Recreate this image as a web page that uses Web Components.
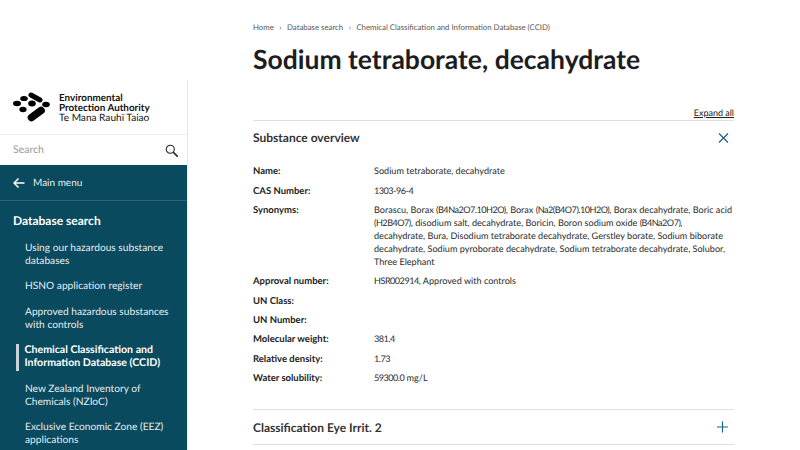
<!DOCTYPE html>
<html lang="en">
<head>
<meta charset="UTF-8">
<title>Sodium tetraborate, decahydrate</title>
<style>
  html, body { margin: 0; height: 100%; overflow: hidden; background: #fff; }
  body { font-family: Lato, "Liberation Sans", sans-serif; color: #222; text-rendering: geometricPrecision; }
  /* formulas run narrower in the original face */
  .f { letter-spacing: -.5px; }
</style>
</head>
<body>
<epa-page>
  <epa-sidebar slot="side">
    <epa-nav-link>Using our hazardous substance databases</epa-nav-link>
    <epa-nav-link>HSNO application register</epa-nav-link>
    <epa-nav-link>Approved hazardous substances with controls</epa-nav-link>
    <epa-nav-link active>Chemical Classification and Information Database (CCID)</epa-nav-link>
    <epa-nav-link>New Zealand Inventory of Chemicals (NZIoC)</epa-nav-link>
    <epa-nav-link>Exclusive Economic Zone (EEZ) applications</epa-nav-link>
  </epa-sidebar>

  <epa-crumbs slot="crumbs">
    <span>Home</span>
    <span>Database search</span>
    <span>Chemical Classification and Information Database (CCID)</span>
  </epa-crumbs>
  <h1>Sodium tetraborate, decahydrate</h1>

  <epa-accordion heading="Substance overview" open expand>
    <epa-field label="Name:">Sodium tetraborate, decahydrate</epa-field>
    <epa-field label="CAS Number:"><span class="f">1303-96-4</span></epa-field>
    <epa-field label="Synonyms:">Borascu, Borax <span class="f">(B4Na2O7.10H2O)</span>, Borax <span class="f">(Na2(B4O7).10H2O)</span>, Borax decahydrate, Boric acid<br><span class="f">(H2B4O7)</span>, disodium salt, decahydrate, Boricin, Boron sodium oxide <span class="f">(B4Na2O7)</span>,<br>decahydrate, Bura, Disodium tetraborate decahydrate, Gerstley borate, Sodium biborate<br>decahydrate, Sodium pyroborate decahydrate, Sodium tetraborate decahydrate, Solubor,<br>Three Elephant</epa-field>
    <epa-field label="Approval number:"><span class="f">HSR002914</span>, Approved with controls</epa-field>
    <epa-field label="UN Class:"></epa-field>
    <epa-field label="UN Number:"></epa-field>
    <epa-field label="Molecular weight:"><span class="f">381.4</span></epa-field>
    <epa-field label="Relative density:"><span class="f">1.73</span></epa-field>
    <epa-field label="Water solubility:"><span class="f">59300.0</span> mg/L</epa-field>
  </epa-accordion>
  <epa-accordion heading="Classification Eye Irrit. 2"></epa-accordion>
</epa-page>

<template id="page-tpl">
  <style>
    :host { display: grid; grid-template-columns: 188px 1fr; height: 450px; overflow: hidden; }
    .side { padding-top: 80px; }
    .main { padding: 0 66px 0 65px; min-width: 0; }
    ::slotted(h1) {
      margin: 0;
      padding: 7px 0 0;
      height: 58px;
      font-size: 26.5px;
      line-height: 36px;
      font-weight: 700;
      color: #1d1d1f;
    }
  </style>
  <div class="side"><slot name="side"></slot></div>
  <div class="main">
    <slot name="crumbs"></slot>
    <slot></slot>
  </div>
</template>

<template id="sidebar-tpl">
  <style>
    :host { display: block; border-right: 1px solid #e8e8e8; }
    .logo { display: flex; align-items: center; gap: 8px; padding-left: 12px; border-bottom: 1px solid #eee; box-sizing: border-box; height: 55px; }
    .logo svg { width: 39px; height: 31px; flex: none; }
    .org { font-size: 9.87px; line-height: 10.3px; color: #111; font-weight: 700; padding-top: 2px; }
    .org span { display: block; font-weight: 400; font-size: 10.1px; }
    .search { height: 30px; display: flex; align-items: center; justify-content: space-between; padding: 0 9px 0 13px; box-sizing: border-box; color: #9b9b9b; font-size: 10.5px; }
    .search svg { width: 13px; height: 13px; }
    .nav { background: #0a4a5e; color: #fff; height: 285px; overflow: hidden; }
    .back { height: 35px; display: flex; align-items: center; gap: 8px; padding-left: 13px; font-size: 10px; border-bottom: 1px solid #2c6375; color: #e6eef0; }
    .back svg { width: 12px; height: 12px; }
    h2 { margin: 0; padding: 12px 0 7px 13px; font-size: 12px; line-height: 16px; font-weight: 700; }
    .list { display: flex; flex-direction: column; gap: 0; }
  </style>
  <div class="logo">
    <svg viewBox="12 91.5 39 31">
      <g fill="#000" stroke="#000" stroke-linecap="round">
        <ellipse cx="17" cy="103" rx="4" ry="2.7" stroke="none"/>
        <ellipse cx="24" cy="98" rx="3.8" ry="2.6" stroke="none"/>
        <ellipse cx="23" cy="109" rx="3.6" ry="2.8" stroke="none"/>
        <ellipse cx="32" cy="103" rx="3.8" ry="3" stroke="none"/>
        <ellipse cx="46" cy="104" rx="3.8" ry="2.7" stroke="none"/>
        <line x1="31" y1="94.5" x2="40" y2="99.5" stroke-width="5"/>
        <line x1="31.5" y1="117" x2="41" y2="110" stroke-width="7.6"/>
      </g>
    </svg>
    <div class="org">Environmental<br>Protection Authority<span>Te Mana Rauhī Taiao</span></div>
  </div>
  <div class="search">
    <span>Search</span>
    <svg viewBox="0 0 16 16" fill="none" stroke="#222"><circle cx="6.5" cy="6.5" r="5" stroke-width="1.3"/><line x1="10.2" y1="10.2" x2="15" y2="15" stroke-width="2" stroke-linecap="round"/></svg>
  </div>
  <div class="nav">
    <div class="back">
      <svg viewBox="0 0 12 12" fill="none" stroke="#fff" stroke-width="1.5"><path d="M11.5 6H1M5.5 1.5L1 6l4.5 4.5"/></svg>
      <span>Main menu</span>
    </div>
    <h2>Database search</h2>
    <div class="list"><slot></slot></div>
  </div>
</template>

<template id="navlink-tpl">
  <style>
    :host { display: block; padding: 6px 10px 6.4px 25px; font-size: 10.2px; line-height: 13px; color: #e4ecef; position: relative; }
    :host([active]) { font-weight: 700; font-size: 10.6px; color: #fff; padding-left: 24.5px; }
    :host([active])::before { content: ""; position: absolute; left: 16px; top: 6px; bottom: 6px; width: 2.5px; background: #c9d4d8; }
  </style>
  <slot></slot>
</template>

<template id="crumbs-tpl">
  <style>
    :host { display: block; padding-top: 21px; height: 13px; font-size: 7.8px; line-height: 12px; color: #555; }
    .row { display: flex; gap: 0; white-space: nowrap; }
    ::slotted(span:not(:last-child))::after { content: "›"; margin: 0 5.5px; }
  </style>
  <div class="row"><slot></slot></div>
</template>

<template id="accordion-tpl">
  <style>
    :host { display: block; }
    .expand { display: none; text-align: right; height: 13px; font-size: 9px; line-height: 12px; padding-top: 8px; }
    .expand u { color: #222; text-underline-offset: 1px; }
    :host([expand]) .expand { display: block; }
    .head { display: flex; align-items: center; justify-content: space-between; border-top: 1px solid #e0e0e0; height: 34px; font-size: 12px; font-weight: 700; color: #333; padding-right: 5px; }
    :host([expand]) .head { height: 33px; }
    svg { width: 12px; height: 12px; }
    .body { display: none; padding: 8px 0 21px; }
    :host([open]) .body { display: block; }
    :host(:not([open])) .head { border-bottom: 1px solid #e0e0e0; }
  </style>
  <div class="expand"><u>Expand all</u></div>
  <div class="head">
    <span id="title"></span>
    <svg viewBox="0 0 12 12" fill="none" stroke="#1b6480" stroke-width="1.2"><path id="ico"/></svg>
  </div>
  <div class="body"><slot></slot></div>
</template>

<template id="field-tpl">
  <style>
    :host { display: grid; grid-template-columns: 121px 1fr; font-size: 9.1px; line-height: 13px; padding: 3.2px 0; color: #2b2b2b; white-space: nowrap; }
    b { font-weight: 700; font-size: 9.5px; color: #222; }
    .val { margin: -1px 0 1px; }
  </style>
  <b id="label"></b>
  <div class="val"><slot></slot></div>
</template>

<script>
  const tpl = id => document.getElementById(id).content.cloneNode(true)

  class EpaPage extends HTMLElement {
    constructor() {
      super()
      this.attachShadow({ mode: 'open' }).appendChild(tpl('page-tpl'))
    }
  }
  class EpaSidebar extends HTMLElement {
    constructor() {
      super()
      this.attachShadow({ mode: 'open' }).appendChild(tpl('sidebar-tpl'))
    }
  }
  class EpaNavLink extends HTMLElement {
    constructor() {
      super()
      this.attachShadow({ mode: 'open' }).appendChild(tpl('navlink-tpl'))
    }
  }
  class EpaCrumbs extends HTMLElement {
    constructor() {
      super()
      this.attachShadow({ mode: 'open' }).appendChild(tpl('crumbs-tpl'))
    }
  }
  class EpaAccordion extends HTMLElement {
    constructor() {
      super()
      this.attachShadow({ mode: 'open' }).appendChild(tpl('accordion-tpl'))
    }
    connectedCallback() {
      this.shadowRoot.getElementById('title').textContent = this.getAttribute('heading')
      // x when open, plus when closed
      this.shadowRoot.getElementById('ico').setAttribute('d', this.hasAttribute('open')
        ? 'M2 1.5l9 9M11 1.5l-9 9' : 'M5.5 .5v11M0 6h11')
    }
  }
  class EpaField extends HTMLElement {
    constructor() {
      super()
      this.attachShadow({ mode: 'open' }).appendChild(tpl('field-tpl'))
    }
    connectedCallback() {
      this.shadowRoot.getElementById('label').textContent = this.getAttribute('label')
    }
  }

  customElements.define('epa-page', EpaPage)
  customElements.define('epa-sidebar', EpaSidebar)
  customElements.define('epa-nav-link', EpaNavLink)
  customElements.define('epa-crumbs', EpaCrumbs)
  customElements.define('epa-accordion', EpaAccordion)
  customElements.define('epa-field', EpaField)
</script>
</body>
</html>
